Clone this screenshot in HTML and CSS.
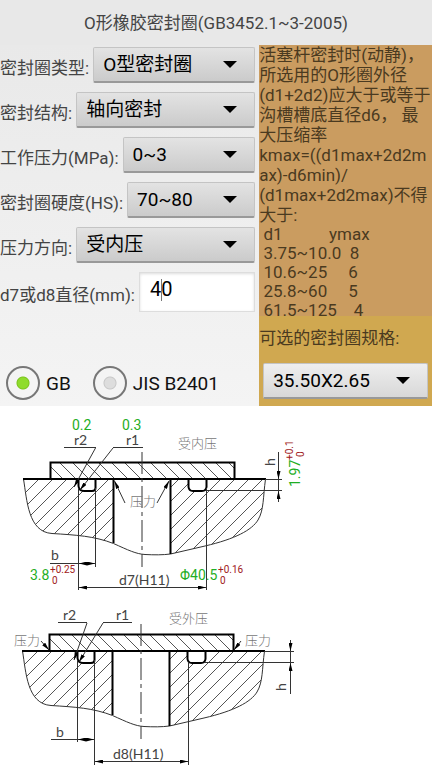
FILE: index.html
```
<!DOCTYPE html>
<html lang="zh-CN">

<head>
    <meta charset="UTF-8">
    <meta name="viewport" content="width=device-width, initial-scale=1.0">
    <title>O形橡胶密封圈</title>
    <link rel="stylesheet" href="styles.css">
</head>

<body>
    <h1 class="title">O形橡胶密封圈(GB3452.1~3-2005)</h1>
    <form class="wrap" action="">
        <div class="params">
            <div class="row">
                <label for="type">密封圈类型:</label>
                <select id="type" class="spinner">
                    <option>O型密封圈</option>
                </select>
            </div>
            <div class="row">
                <label for="struct">密封结构:</label>
                <select id="struct" class="spinner">
                    <option>轴向密封</option>
                </select>
            </div>
            <div class="row">
                <label for="pressure">工作压力(MPa):</label>
                <select id="pressure" class="spinner">
                    <option>0~3</option>
                </select>
            </div>
            <div class="row">
                <label for="hardness">密封圈硬度(HS):</label>
                <select id="hardness" class="spinner">
                    <option>70~80</option>
                </select>
            </div>
            <div class="row">
                <label for="direction">压力方向:</label>
                <select id="direction" class="spinner">
                    <option>受内压</option>
                    <option>受外压</option>
                </select>
            </div>
            <div class="row">
                <label for="diameter">d7或d8直径(mm):</label>
                <div class="field">
                    <input id="diameter" type="text" value="40">
                    <span class="caret"></span>
                </div>
            </div>
            <div class="standard">
                <label><input type="radio" name="standard" checked>GB</label>
                <label><input type="radio" name="standard">JIS B2401</label>
            </div>
        </div>
        <div class="side">
            <div class="notes">
                <p>活塞杆密封时(动静)，<br>所选用的O形圈外径<br>(d1+2d2)应大于或等于<br>沟槽槽底直径d6， 最<br>大压缩率<br>kmax=((d1max+2d2max)-d6min)/<br>(d1max+2d2max)不得大于:</p>
                <p class="limits"> d1           ymax
 3.75~10.0  8
 10.6~25     6
 25.8~60     5
 61.5~125    4</p>
            </div>
            <div class="result">
                <label for="size">可选的密封圈规格:</label>
                <select id="size" class="spinner light">
                    <option>35.50X2.65</option>
                </select>
            </div>
        </div>
    </form>
    <svg class="drawing" viewBox="0 406 432 362">
        <defs>
            <pattern id="hatch" width="14" height="14" patternUnits="userSpaceOnUse">
                <path class="hatch" d="M-1 15L15 -1M-1 1L1 -1M13 15L15 13" />
            </pattern>
            <pattern id="hatch-plate" width="13" height="13" patternUnits="userSpaceOnUse">
                <path class="hatch" d="M-1 -1L14 14M-1 12L1 14M12 -1L14 1" />
            </pattern>
            <marker id="arrow" viewBox="0 0 8 4" refX="8" refY="2" markerWidth="8" markerHeight="4" markerUnits="userSpaceOnUse" orient="auto-start-reverse">
                <path d="M0 0L8 2L0 4z" />
            </marker>
            <!-- 法兰和沟槽剖面，两个图共用 -->
            <g id="section">
                <path fill="url(#hatch)" d="M23.500 479C27 500 28 532 52 533.500S94 536 113.500 543.500V479z" />
                <path fill="url(#hatch)" d="M170.500 554L205 546C235 539 252 530 258 520S263 497 265.500 479H170.500z" />
                <path class="thin" d="M23.500 479C27 500 28 532 52 533.500S94 536 113.500 543.500C128 550 136 554 145 554.500S163 555 170.500 554L205 546C235 539 252 530 258 520S263 497 265.500 479" />
                <rect fill="url(#hatch-plate)" class="bold" x="50.500" y="462.500" width="184" height="16.500" />
                <path class="bold" d="M23 479H266M113.500 479V543M170.500 479V554" />
                <path class="bold groove" d="M78.500 480V486Q79 491 84 491H92Q95.500 491 95.500 488V480" />
                <path class="bold groove" d="M188.500 480V487Q189 491 193 491H202Q206 491 206.500 487V480" />
                <path class="thin axis" d="M142 452V567" />
            </g>
        </defs>

        <!-- 受内压 -->
        <use href="#section" />
        <path class="thin" d="M64 447.500H96M113 447.500H143M78.500 488V590M95.500 488V567M206.500 488V590M50 563.500H79M265 479.500H282M206 490.500H282" />
        <path class="thin to" d="M95.500 448L74 487" />
        <path class="thin to" d="M113 448L80 490" />
        <path class="thin to" d="M125 503L114.500 481" />
        <path class="thin to" d="M157 503L169 481" />
        <path class="thin to" d="M278.500 452V479" />
        <path class="thin to" d="M278.500 502V491" />
        <path class="thin" d="M278.500 479V491" />
        <path class="thin both" d="M79 563.500H95" />
        <path class="thin both" d="M79 587.500H206" />
        <text class="dim" x="74" y="445">r2</text>
        <text class="dim" x="126" y="445">r1</text>
        <text class="dim" x="51" y="560">b</text>
        <text class="dim" x="119" y="585">d7(H11)</text>
        <text class="dim" transform="translate(275 466) rotate(-90)">h</text>
        <text class="cn" x="178" y="448">受内压</text>
        <text class="cn" x="130" y="506">压力</text>
        <text class="val" x="72" y="430">0.2</text>
        <text class="val" x="122" y="430">0.3</text>
        <text class="val" x="30" y="580">3.8</text>
        <text class="tol" x="50" y="573">+0.25</text>
        <text class="tol" x="52" y="584">0</text>
        <text class="val" x="180" y="580">Φ40.5</text>
        <text class="tol" x="218" y="573">+0.16</text>
        <text class="tol" x="220" y="584">0</text>
        <g transform="translate(300 487) rotate(-90)">
            <text class="val" x="0" y="0">1.97</text>
            <text class="tol" x="27" y="-7">+0.1</text>
            <text class="tol" x="30" y="4">0</text>
        </g>

        <!-- 受外压 -->
        <use href="#section" x="-1" y="172" />
        <path class="thin" d="M58 622.500H87M103 622.500H132M77.500 660V742M94.500 660V765M188.500 662V765M51 739.500H78M264 651.500H294M205 662.500H294" />
        <path class="thin to" d="M87 623L74 660" />
        <path class="thin to" d="M103 623L79 662" />
        <path class="thin to" d="M41 641L49 650" />
        <path class="thin to" d="M241 641L234 650" />
        <path class="thin to" d="M290.500 640V651" />
        <path class="thin to" d="M290.500 694V663" />
        <path class="thin" d="M290.500 651V663" />
        <path class="thin both" d="M78 739.500H94" />
        <path class="thin both" d="M95 761.500H188" />
        <text class="dim" x="63" y="620">r2</text>
        <text class="dim" x="116" y="620">r1</text>
        <text class="dim" x="56" y="737">b</text>
        <text class="dim" x="113" y="759">d8(H11)</text>
        <text class="dim" transform="translate(286 691) rotate(-90)">h</text>
        <text class="cn" x="169" y="623">受外压</text>
        <text class="cn" x="14" y="645">压力</text>
        <text class="cn" x="245" y="645">压力</text>
    </svg>
</body>

</html>
```
FILE: styles.css
```
* {
    margin: 0;
    padding: 0;
    box-sizing: border-box;
}
body {
    background: #fff;
    color: #444;
    font-family: Roboto, "Noto Sans CJK SC", sans-serif;
    font-size: 17px;
}
.title {
    height: 45px;
    background: #e8e8e8;
    line-height: 46px;
    font-size: 17px;
    font-weight: 400;
    text-align: center;
}
.wrap {
    display: flex;
    background: linear-gradient(#e9e9e9, #f4f4f4);
}
.params {
    width: 60%;
    padding: 2px 4px 6px 0;
}
.row {
    display: flex;
    align-items: center;
    gap: 4px;
    margin-bottom: 9px;
}
.row label {
    flex: none;
    padding-top: 5px;
    line-height: 24px;
}
.spinner {
    flex: 1;
    min-width: 0;
    width: 100%;
    height: 36px;
    padding: 0 36px 0 9px;
    border: 1px solid #c4c4c4;
    border-bottom: 2px solid #999;
    border-radius: 2px;
    appearance: none;
    outline: none;
    color: #000;
    font-family: inherit;
    font-size: 19px;
    background: url("data:image/svg+xml,%3Csvg xmlns='http://www.w3.org/2000/svg' width='16' height='9'%3E%3Cpath d='M1 1H15L8 8z'/%3E%3C/svg%3E") no-repeat right 16px center, linear-gradient(#e3e3e3, #cbcbcb);
}
.spinner.light {
    background: url("data:image/svg+xml,%3Csvg xmlns='http://www.w3.org/2000/svg' width='16' height='9'%3E%3Cpath d='M1 1H15L8 8z'/%3E%3C/svg%3E") no-repeat right 16px center, linear-gradient(#eee, #d8d8d8);
}
.field {
    position: relative;
    flex: 1;
    min-width: 0;
}
.field input {
    display: block;
    width: 100%;
    height: 40px;
    padding: 0 10px 6px;
    border: 1px solid #ddd;
    outline: none;
    background: #fff;
    box-shadow: inset 0 1px 3px #ddd;
    color: #000;
    font-family: inherit;
    font-size: 20px;
}
.caret {
    position: absolute;
    left: 22px;
    top: 7px;
    width: 1px;
    height: 22px;
    background: #777;
}
.standard {
    display: flex;
    gap: 22px;
    margin-top: 54px;
    padding-left: 6px;
    color: #111;
    font-size: 19px;
}
.standard label {
    display: flex;
    align-items: center;
    gap: 6px;
    white-space: nowrap;
}
.standard input {
    width: 34px;
    height: 34px;
    border: 2px solid #777;
    border-radius: 50%;
    appearance: none;
    background: radial-gradient(circle, #ddd 0 5px, #c8c8c8 6px, #f4f4f4 7px);
}
.standard input:checked {
    background: radial-gradient(circle, #8fdc2c 0 5px, #7cc41f 6px, #f4f4f4 7px);
}

.side {
    width: 40%;
    display: flex;
    flex-direction: column;
    background: #d0a850;
    color: #4a3a20;
}
.notes {
    flex: 1 1 0;
    min-height: 0;
    overflow: auto;
    scrollbar-width: none;
    background: #ca9c60;
    line-height: 20px;
    word-break: break-all;
}
.notes .limits {
    white-space: pre;
    line-height: 19px;
}
.result {
    padding: 10px 4px 7px;
}
.result label {
    display: block;
    margin: 0 -4px 12px;
    line-height: 25px;
}

.drawing {
    display: block;
    width: 100%;
}
.drawing .hatch,
.drawing .thin {
    fill: none;
    stroke: #333;
    stroke-width: 1;
}
.drawing .hatch {
    stroke: #555;
}
.drawing .bold {
    stroke: #000;
    stroke-width: 2;
}
.drawing .groove {
    fill: #fff;
}
.drawing .axis {
    stroke-dasharray: 22 4 4 4;
}
.drawing .to {
    marker-end: url(#arrow);
}
.drawing .both {
    marker-start: url(#arrow);
    marker-end: url(#arrow);
}
.drawing .dim {
    fill: #444;
    font-family: Lato, sans-serif;
    font-size: 14px;
}
.drawing .cn {
    fill: #777;
    font-family: "Noto Sans CJK SC", sans-serif;
    font-size: 13px;
    font-weight: 300;
}
.drawing .val {
    fill: #1fae24;
    font-size: 14px;
}
.drawing .tol {
    fill: #a02020;
    font-size: 10px;
}
```
